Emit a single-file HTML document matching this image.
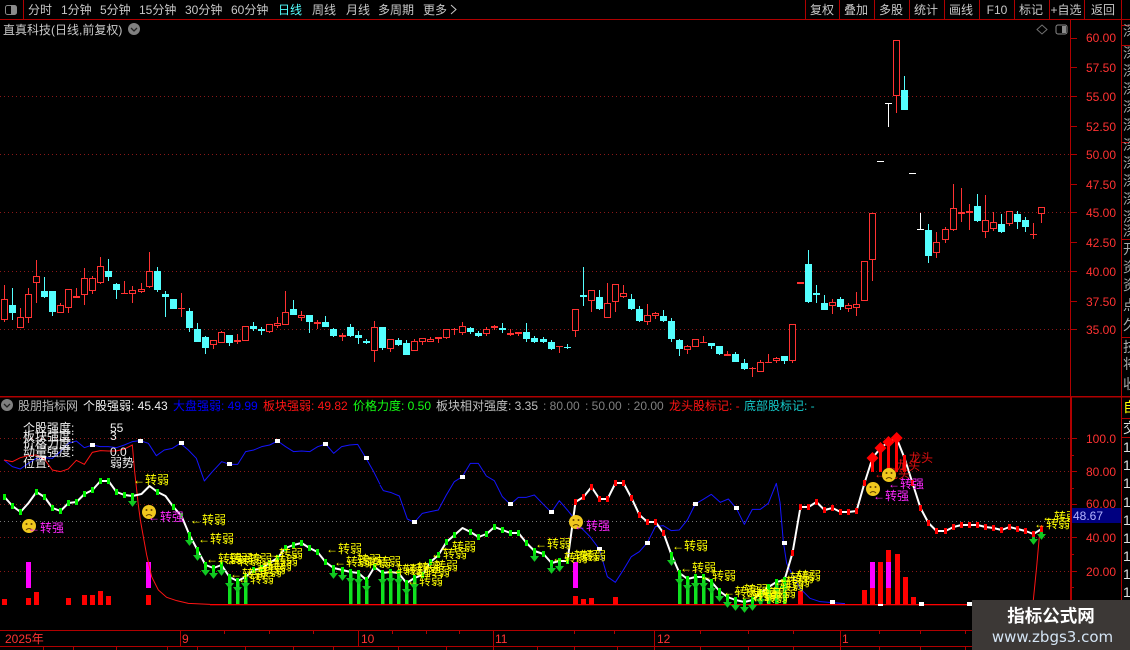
<!DOCTYPE html>
<html><head><meta charset="utf-8"><style>
html,body{margin:0;padding:0;background:#000;width:1130px;height:650px;overflow:hidden}
svg{display:block;position:absolute;left:0;top:0}
text{font-family:"Liberation Sans","WenQuanYi Zen Hei","Noto Sans CJK SC",sans-serif;font-size:12px;white-space:pre}
.y text{fill:#ffff00}
.m text{fill:#ff28ff}
.a text{fill:#ff3232;text-anchor:end}
.t text{fill:#c8c8c8}
.s text{fill:#a8a8a8;font-size:14px}
</style></head><body>
<svg id="c" width="1130" height="650" viewBox="0 0 1130 650" xmlns="http://www.w3.org/2000/svg">
<defs><clipPath id="ch"><rect x="0" y="397" width="1070" height="233"/></clipPath>
<clipPath id="sb"><rect x="1123" y="0" width="7" height="650"/></clipPath></defs>
<rect width="1130" height="650" fill="#000"/>
<!-- frame -->
<g fill="#b00000">
<rect x="0" y="19" width="1130" height="1"/><rect x="23" y="0" width="1" height="19"/>
<rect x="805" y="0" width="1" height="19"/><rect x="839" y="0" width="1" height="19"/><rect x="874" y="0" width="1" height="19"/><rect x="909" y="0" width="1" height="19"/><rect x="944" y="0" width="1" height="19"/><rect x="979" y="0" width="1" height="19"/><rect x="1014" y="0" width="1" height="19"/><rect x="1049" y="0" width="1" height="19"/><rect x="1084" y="0" width="1" height="19"/>
<rect x="1121" y="0" width="1" height="650"/>
<rect x="1070" y="20" width="1" height="376"/><rect x="1070" y="397" width="2" height="250"/>
<rect x="0" y="396" width="1130" height="1.5"/>
<rect x="0" y="630" width="1122" height="1"/><rect x="0" y="646" width="1122" height="1"/>
<rect x="1122" y="25" width="8" height="1"/><rect x="1122" y="45" width="8" height="1"/><rect x="1122" y="142" width="8" height="1"/><rect x="1122" y="239" width="8" height="1"/><rect x="1122" y="337" width="8" height="1"/><rect x="1122" y="418" width="8" height="1"/><rect x="1122" y="437" width="8" height="1"/>
<rect x="180" y="631" width="1" height="15"/><rect x="358" y="631" width="1" height="15"/><rect x="493" y="631" width="1" height="15"/><rect x="654" y="631" width="1" height="15"/><rect x="840" y="631" width="1" height="15"/>
</g>
<g id="ticks" fill="#b00000"></g>
<!-- top bar -->
<rect x="5.500" y="5.500" width="11" height="9" rx="2" fill="none" stroke="#8a8a8a" stroke-width="1"/><rect x="11" y="6" width="5" height="8" fill="#8a8a8a"/>
<g class="t">
<text x="28" y="14">分时</text><text x="61" y="14">1分钟</text><text x="100" y="14">5分钟</text><text x="139" y="14">15分钟</text><text x="185" y="14">30分钟</text><text x="231" y="14">60分钟</text>
<text x="278" y="14" style="fill:#54ffff">日线</text><text x="312" y="14">周线</text><text x="346" y="14">月线</text><text x="378" y="14">多周期</text><text x="423" y="14">更多</text>
</g>
<path d="M451 5l5 4.500-5 4.500" fill="none" stroke="#c8c8c8"/>
<g class="t" text-anchor="middle">
<text x="822" y="14">复权</text><text x="856" y="14">叠加</text><text x="891" y="14">多股</text><text x="926" y="14">统计</text><text x="961" y="14">画线</text><text x="997" y="14">F10</text><text x="1031" y="14">标记</text><text x="1066" y="14">+自选</text><text x="1103" y="14">返回</text>
</g>
<!-- main title -->
<g class="t"><text x="3" y="34">直真科技(日线,前复权)</text></g>
<circle cx="134" cy="29" r="6" fill="#808080"/><path d="M131 28l3 3 3-3" fill="none" stroke="#222" stroke-width="1.300"/>
<path d="M1042 25l5 4.500-5 4.500-5-4.500z" fill="none" stroke="#707070"/>
<rect x="1056" y="25" width="11" height="9" rx="2" fill="none" stroke="#8a8a8a"/><rect x="1062" y="26" width="4" height="7" fill="#8a8a8a"/>
<!-- grid main -->
<g stroke="#8a1818" stroke-dasharray="1 3" shape-rendering="crispEdges">
<path d="M0 96.500H1070M0 154.500H1070M0 212.500H1070M0 271.500H1070M0 329.500H1070M0 438.500H1070M0 471.500H1070M0 504.500H1070M0 537.500H1070M0 571.500H1070"/>
<path d="M0 521.500H1070" stroke="#777"/>
</g>
<!-- axis upper -->
<g class="a">
<text x="1116" y="42">60.00</text><text x="1116" y="72">57.50</text><text x="1116" y="101">55.00</text><text x="1116" y="131">52.50</text><text x="1116" y="159">50.00</text><text x="1116" y="189">47.50</text><text x="1116" y="217">45.00</text><text x="1116" y="247">42.50</text><text x="1116" y="276">40.00</text><text x="1116" y="306">37.50</text><text x="1116" y="334">35.00</text>
<text x="1116" y="443">100.0</text><text x="1116" y="476">80.00</text><text x="1116" y="508">60.00</text><text x="1116" y="542">40.00</text><text x="1116" y="576">20.00</text>
</g>
<g id="cd" shape-rendering="crispEdges"></g>
<!-- indicator header -->
<circle cx="7" cy="405" r="6" fill="#808080"/><path d="M4 404l3 3 3-3" fill="none" stroke="#222" stroke-width="1.300"/>
<text x="18" y="410" fill="#b8b8b8">股朋指标网</text>
<text x="83" y="410" fill="#f0f0f0">个股强弱: 45.43</text>
<text x="173" y="410" fill="#0000ff">大盘强弱: 49.99</text>
<text x="263" y="410" fill="#ff1414">板块强弱: 49.82</text>
<text x="353" y="410" fill="#14ff14">价格力度: 0.50</text>
<text x="436" y="410" fill="#c0c0c0">板块相对强度: 3.35</text>
<text x="543" y="410" fill="#808080">: 80.00</text><text x="585" y="410" fill="#808080">: 50.00</text><text x="627" y="410" fill="#808080">: 20.00</text>
<text x="669" y="410" fill="#ff1414">龙头股标记: -</text>
<text x="744" y="410" fill="#14c8c8">底部股标记: -</text>
<g clip-path="url(#ch)">
<!-- volume bars -->
<g fill="#ff0000" shape-rendering="crispEdges">
<rect x="2" y="599" width="5" height="6"/><rect x="26" y="598" width="5" height="7"/><rect x="34" y="592" width="5" height="13"/><rect x="66" y="598" width="5" height="7"/><rect x="82" y="595" width="5" height="10"/><rect x="90" y="595" width="5" height="10"/><rect x="98" y="591" width="5" height="14"/><rect x="106" y="596" width="5" height="9"/><rect x="146" y="595" width="5" height="10"/>
<rect x="573" y="596" width="5" height="9"/><rect x="581" y="599" width="5" height="6"/><rect x="589" y="598" width="5" height="7"/><rect x="613" y="597" width="5" height="8"/>
<rect x="798" y="591" width="5" height="14"/><rect x="862" y="590" width="5" height="15"/><rect x="870" y="588" width="5" height="17"/><rect x="878" y="562" width="5" height="43"/><rect x="886" y="550" width="5" height="55"/><rect x="895" y="554" width="5" height="51"/><rect x="903" y="577" width="5" height="28"/><rect x="911" y="597" width="5" height="8"/>
</g>
<g fill="#ff00ff" shape-rendering="crispEdges">
<rect x="26" y="562" width="5" height="26"/><rect x="146" y="562" width="5" height="26"/><rect x="573" y="562" width="5" height="26"/><rect x="870" y="562" width="5" height="26"/><rect x="886" y="562" width="5" height="26"/>
</g>
<rect x="210" y="604" width="860" height="1.300" fill="#ff0000"/>
<!-- blue line -->
<g fill="none" stroke="#1414ff" stroke-width="3" stroke-linejoin="round">
<polyline transform="translate(0,395) scale(.33333)" points="12,195 37,215 61,222 85,205 109,190 133,188 157,190 181,170 205,145 229,138 253,158 277,150 301,155 325,155 349,158 373,150 397,140 421,137 445,145 469,182 493,165 517,160 541,145 565,165 589,190 613,258 637,230 665,200 689,208 713,208 737,170 761,165 785,155 809,150 833,138 857,155 881,170 905,168 929,170 953,155 977,147 1001,175 1025,155 1049,150 1073,148 1097,188 1121,230 1140,268"/>
<polyline transform="translate(380,395) scale(.33333)" points="0,270 10,287 34,293 58,303 82,372 103,382 127,355 151,350 175,345 199,300 223,260 247,245 271,205 295,205 319,243 343,257 367,305 391,328 415,307 439,307 463,300 487,325 514,352 538,317 562,345 586,375 600,395 630,425 658,462 682,545 706,562 730,525 754,485 778,470 802,443 826,395 850,392 874,407 898,405 922,375 946,327 970,313 994,298 1021,322 1045,312 1069,340 1093,388 1117,343 1141,343 1165,325 1189,265 1200,322 1210,440 1220,505 1240,545 1260,580 1290,610 1320,620 1357,623 1395,626"/>
</g>
<g fill="#fff" shape-rendering="crispEdges">
<rect x="41" y="456" width="5" height="4"/><rect x="90" y="443" width="5" height="4"/><rect x="138" y="439" width="5" height="4"/><rect x="179" y="441" width="5" height="4"/><rect x="227" y="462" width="5" height="4"/><rect x="275" y="439" width="5" height="4"/><rect x="323" y="442" width="5" height="4"/><rect x="364" y="456" width="5" height="4"/>
<rect x="412" y="520" width="5" height="4"/><rect x="460" y="475" width="5" height="4"/><rect x="508" y="502" width="5" height="4"/><rect x="549" y="510" width="5" height="4"/><rect x="693" y="502" width="5" height="4"/><rect x="734" y="506" width="5" height="4"/><rect x="597" y="547" width="5" height="4"/><rect x="645" y="541" width="5" height="4"/><rect x="782" y="541" width="5" height="4"/><rect x="830" y="600" width="5" height="4"/><rect x="878" y="604" width="5" height="2"/><rect x="919" y="602" width="5" height="4"/><rect x="967" y="602" width="5" height="4"/>
</g>
<!-- red line -->
<polyline transform="translate(0,395) scale(.33333)" fill="none" stroke="#ff1414" stroke-width="3" points="12,195 37,200 61,188 85,182 109,180 133,192 157,225 181,230 205,222 229,196 253,208 277,172 301,167 325,168 349,168 373,162 397,150 404,230 415,330 421,375 430,425 440,480 455,545 475,585 500,607 530,617 565,625 630,628"/>
<polyline transform="translate(780,520) scale(.33333)" fill="none" stroke="#ff1414" stroke-width="3" points="760,240 770,140 778,50 785,15"/>
<g id="wl"></g>
<!-- red top shafts -->
<g fill="#ff0000" shape-rendering="crispEdges"><rect x="871" y="458" width="3" height="14"/><rect x="879" y="448" width="3" height="24"/><rect x="887" y="442" width="3" height="30"/><rect x="895" y="438" width="3" height="34"/><rect x="903" y="458" width="3" height="14"/></g>
<g fill="#ff0000"><path d="M872.500 452l6 6-6 6-6-6zM880.500 442l6 6-6 6-6-6zM888.500 436l6 6-6 6-6-6zM896.700 432l6 6-6 6-6-6z"/></g>
<text x="897" y="462" fill="#e01010">←龙头</text><text x="884" y="470" fill="#e01010">←龙头</text><text x="874" y="478" fill="#e01010">←龙头</text>
<!-- yellow labels -->
<g class="y">
<text x="133" y="484">←转弱</text><text x="190" y="524">←转弱</text><text x="198" y="543">←转弱</text><text x="206" y="563">←转弱</text><text x="217" y="563">←转弱</text><text x="226" y="565">←转弱</text><text x="236" y="563">←转弱</text><text x="230" y="578">←转弱</text><text x="238" y="583">←转弱</text><text x="246" y="576">←转弱</text><text x="250" y="573">←转弱</text><text x="256" y="570">←转弱</text><text x="262" y="565">←转弱</text><text x="267" y="558">←转弱</text>
<text x="326" y="553">←转弱</text><text x="334" y="566">←转弱</text><text x="345" y="564">←转弱</text><text x="355" y="567">←转弱</text><text x="365" y="566">←转弱</text><text x="385" y="574">←转弱</text><text x="393" y="574">←转弱</text><text x="405" y="572">←转弱</text><text x="414" y="576">←转弱</text><text x="407" y="585">←转弱</text><text x="422" y="570">←转弱</text><text x="431" y="558">←转弱</text><text x="440" y="551">←转弱</text>
<text x="535" y="548">←转弱</text><text x="552" y="562">←转弱</text><text x="562" y="560">←转弱</text><text x="570" y="560">←转弱</text>
<text x="672" y="550">←转弱</text><text x="680" y="572">←转弱</text><text x="700" y="580">←转弱</text><text x="723" y="596">←转弱</text><text x="732" y="594">←转弱</text><text x="740" y="600">←转弱</text><text x="745" y="598">←转弱</text><text x="752" y="602">←转弱</text><text x="760" y="597">←转弱</text><text x="768" y="590">←转弱</text><text x="774" y="586">←转弱</text><text x="778" y="582">←转弱</text><text x="785" y="580">←转弱</text>
<text x="1034" y="528">←转弱</text><text x="1042" y="521">←转弱</text>
</g>
<!-- smileys -->
<g id="faces">
<g transform="translate(29,526)"><circle r="7" fill="#f0c81e"/><circle cx="-2.500" cy="-2" r="1" fill="#664400"/><circle cx="2.500" cy="-2" r="1" fill="#664400"/><path d="M-3 4q3-3 6 0" fill="none" stroke="#664400"/></g>
<g transform="translate(149,512)"><circle r="7" fill="#f0c81e"/><circle cx="-2.500" cy="-2" r="1" fill="#664400"/><circle cx="2.500" cy="-2" r="1" fill="#664400"/><path d="M-3 4q3-3 6 0" fill="none" stroke="#664400"/></g>
<g transform="translate(576,522)"><circle r="7" fill="#f0c81e"/><circle cx="-2.500" cy="-2" r="1" fill="#664400"/><circle cx="2.500" cy="-2" r="1" fill="#664400"/><path d="M-3 4q3-3 6 0" fill="none" stroke="#664400"/></g>
<g transform="translate(873,489)"><circle r="7" fill="#f0c81e"/><circle cx="-2.500" cy="-2" r="1" fill="#664400"/><circle cx="2.500" cy="-2" r="1" fill="#664400"/><path d="M-3 4q3-3 6 0" fill="none" stroke="#664400"/></g>
<g transform="translate(889,475)"><circle r="7" fill="#f0c81e"/><circle cx="-2.500" cy="-2" r="1" fill="#664400"/><circle cx="2.500" cy="-2" r="1" fill="#664400"/><path d="M-3 4q3-3 6 0" fill="none" stroke="#664400"/></g>
</g>
<g class="m">
<text x="28" y="532">←转强</text><text x="148" y="521">←转强</text><text x="574" y="530">←转强</text><text x="873" y="500">←转强</text><text x="888" y="488">←转强</text>
</g>
</g>
<!-- overlay text -->
<g>
<text x="23" y="432" fill="#f0f0f0">个股强度:</text><text x="110" y="432" fill="#f0f0f0">55</text>
<text x="23" y="440" fill="#f0f0f0">板块强度:</text><text x="110" y="440" fill="#f0f0f0">3</text>
<text x="23" y="448" fill="#f0f0f0">价格力度:</text>
<text x="23" y="456" fill="#f0f0f0">动量强度:</text><text x="110" y="456" fill="#f0f0f0">0.0</text>
<text x="23" y="467" fill="#f0f0f0">位置:</text><text x="110" y="467" fill="#f0f0f0">弱势</text>
</g>
<!-- lower right value -->
<rect x="1072" y="508" width="49" height="15" fill="#000080"/>
<text x="1073" y="520" fill="#b4b4ff">48.67</text>
<!-- time axis -->
<text x="5" y="643" fill="#ff3232">2025年</text><text x="182" y="643" fill="#ff3232">9</text><text x="361" y="643" fill="#ff3232">10</text><text x="495" y="643" fill="#ff3232">11</text><text x="657" y="643" fill="#ff3232">12</text><text x="842" y="643" fill="#ff3232">1</text>
<!-- sidebar -->
<g clip-path="url(#sb)" class="s">
<text x="1123" y="36">深</text><text x="1123" y="58">深</text><text x="1123" y="76">深</text><text x="1123" y="94">深</text><text x="1123" y="112">深</text><text x="1123" y="130">深</text><text x="1123" y="150">深</text><text x="1123" y="168">深</text><text x="1123" y="186">深</text><text x="1123" y="204">深</text><text x="1123" y="222">深</text><text x="1123" y="236">深</text>
<text x="1123" y="254">开</text><text x="1123" y="272">资</text><text x="1123" y="290">资</text><text x="1123" y="310">点</text><text x="1123" y="330">久</text><text x="1123" y="352">技</text><text x="1123" y="369">将</text><text x="1123" y="389">收</text>
<text x="1123" y="412" style="fill:#ffff00">自</text><text x="1123" y="433" style="fill:#e0e0e0">交</text>
<text x="1123" y="452" style="fill:#e0e0e0">1</text><text x="1123" y="470" style="fill:#e0e0e0">1</text><text x="1123" y="488" style="fill:#e0e0e0">1</text><text x="1123" y="507" style="fill:#e0e0e0">1</text><text x="1123" y="525" style="fill:#e0e0e0">1</text><text x="1123" y="543" style="fill:#e0e0e0">1</text><text x="1123" y="561" style="fill:#e0e0e0">1</text><text x="1123" y="579" style="fill:#e0e0e0">1</text><text x="1123" y="597" style="fill:#e0e0e0">1</text>
</g>
<!-- watermark -->
<rect x="972" y="600" width="158" height="50" fill="#3c3836"/>
<text x="1051" y="622" text-anchor="middle" fill="#fff" style="font-size:17.500px;font-weight:bold;font-family:'Noto Sans CJK SC',sans-serif">指标公式网</text>
<text x="1052.500" y="642" text-anchor="middle" fill="#d4e4f4" style="font-size:15px;font-family:'DejaVu Sans',sans-serif">www.zbgs3.com</text>
<script>
(function(){
var NS="http://www.w3.org/2000/svg",R="#ff3232",C="#54ffff",W="#ffffff";
function el(p,n,a){var e=document.createElementNS(NS,n);for(var k in a)e.setAttribute(k,a[k]);p.appendChild(e);return e}
function X(i){return Math.floor(4.33+8.04*i)}
var cd=document.getElementById("cd");
function candle(i,t,wt,bt,bb,wb){
 var x=X(i),col=t=="r"?R:t=="c"?C:W;
 var hollow=t=="r"&&(bb-bt)>2.5;
 el(cd,"rect",{x:x,y:wt,width:1,height:Math.max(wb-wt,1),fill:col});
 if(t=="w"){el(cd,"rect",{x:x-3,y:bt,width:7,height:Math.max(bb-bt,1),fill:col});return}
 if(hollow){el(cd,"rect",{x:x-3,y:bt,width:7,height:bb-bt,fill:"#000"});
  el(cd,"rect",{x:x-2.5,y:bt+.5,width:6,height:bb-bt-1,fill:"none",stroke:col,"stroke-width":1});}
 else el(cd,"rect",{x:x-3,y:bt,width:7,height:Math.max(bb-bt,1),fill:col});
}
function block(y0,start,s){s.split(";").forEach(function(r,k){var p=r.trim().split(" ");
 var f=function(v){return Math.round(y0+(+v)/3)};
 candle(start+k,p[0],f(p[1]),f(p[2]),f(p[3]),f(p[4]));});}
block(240,0,"r 135 178 239 245;c 144 195 219 240;r 205 232 263 263;r 144 163 233 248;r 60 109 128 188;c 111 153 171 173;c 153 153 216 228;r 189 196 219 219;r 147 148 203 219;r 144 168 174 174;r 84 115 164 195;r 108 115 152 162;r 51 79 128 131;c 57 93 111 123;c 129 132 150 177;r 123 159 161 162;r 138 151 161 189;r 129 148 155 159;r 36 94 140 144;c 81 93 150 156;c 153 162 171 231;c 177 177 207 207;r 159 204 206 231;c 205 213 264 276;c 249 267 306 306;c 288 291 324 342;r 300 301 315 327;r 274 277 309 309;c 285 285 309 318;r 282 300 306 312;r 258 259 303 303;c 246 258 267 273;c 261 267 273 285;r 252 253 276 279;r 231 250 258 264;r 153 217 255 255;c 180 207 225 225;r 213 226 234 243;c 225 225 246 279;r 240 246 252 267;c 228 246 261 261;c 264 267 288 291;r 279 285 291 303;c 252 261 288 291;c 273 285 294 312;c 297 303 309 312;r 243 262 333 366");
block(280,47,"c 141 141 204 210;r 177 178 206 216;c 174 180 195 197;c 180 189 225 225;r 178 184 212 213;r 175 175 185 195;r 171 178 185 186;r 171 171 177 189;r 147 148 173 177;r 144 147 149 165;r 126 139 158 165;c 141 144 156 162;c 153 159 168 171;r 141 148 162 168;r 135 139 145 150;c 129 144 150 159;r 147 159 165 168;r 156 156 162 168;c 129 156 177 186;c 168 174 186 189;c 171 177 186 189;c 180 186 207 210;r 198 198 200 219;c 192 201 204 207;r 88 88 152 171;c -39 45 51 78;r 30 31 63 96;c 30 51 87 90;r 9 69 113 114;r 12 13 65 96;r 15 40 50 54;c 42 57 87 90;c 78 87 123 126;r 72 105 125 135;r 96 99 107 117;c 90 108 123 126;c 114 123 177 186;c 177 180 207 228;r 195 199 209 222;r 177 178 200 201;r 168 186 188 189;c 189 189 198 207;c 198 198 222 225;r 213 222 228 228;c 216 222 246 246;c 237 249 267 270;r 261 263 265 291;r 240 247 275 276;r 222 246 248 249;r 231 235 242 249;c 228 228 243 252;r 132 133 242 249");
block(130,99,"r 456 456 462 462;c 360 402 516 519;c 465 489 495 519;c 495 519 540 540;r 507 516 527 552;c 501 507 531 540;r 519 526 537 546;r 486 523 533 558;r 393 394 512 513;r 250 250 389 453;w 93 93 96 96");
block(0,110,"w 309 309 312 381;r 121 121 289 339;c 228 270 329 329");
block(130,113,"w 129 129 132 132;w 250 296 299 299;c 282 300 378 399;r 306 337 369 384;r 291 298 329 339;r 162 235 299 303;r 174 246 251 276;r 222 243 248 300;c 192 228 273 276;r 195 271 305 324;r 246 277 297 303;c 252 282 306 309;r 243 244 281 288;c 243 252 276 297;c 261 270 291 306;r 279 312 315 327;r 232 232 251 279");
/* indicator */
var Y=[497,506,512,503,492,497,508,511,503,502,494,490,481,481,492,495,496,494,486,492,496,507,516,535,550,565,568,565,577,581,577,570,568,563,558,548,545,543,548,552,562,568,570,572,573,580,567,573,572,573,583,578,575,562,555,542,535,528,532,537,534,527,530,533,533,543,551,554,563,561,561,502,497,487,499,499,483,483,498,515,522,522,533,555,573,579,577,577,582,591,597,600,602,600,593,587,582,580,553,507,507,502,510,508,512,512,511,483,458,448,442,438,458,483,508,523,531,531,527,525,525,525,527,528,530,527,529,531,534,529];
var wl=document.getElementById("wl"),pts=[];
Y.forEach(function(v,i){pts.push((X(i)+.5)+","+v)});
el(wl,"polyline",{points:pts.join(" "),fill:"none",stroke:"#fff","stroke-width":2,"stroke-linejoin":"round"});
var G="#00f000",D="#ff0000";
function isRed(i){return (i>=71&&i<=82)||i>=98}
function head(x,y,s){el(wl,"polygon",{points:(x+.5-s)+","+y+" "+(x+.5+s)+","+y+" "+(x+.5)+","+(y+s*1.3),fill:"#10c820"})}
var arrows=[16,23,24,25,26,27,41,42,66,68,69,83,89,90,91,92,93,128,129];
var bars=[28,29,30,43,44,45,47,48,49,50,51,84,85,86,87,88,94,95,96,97];
arrows.forEach(function(i){var x=X(i),y=Y[i];
 el(wl,"rect",{x:x-1,y:y-3,width:3,height:9,fill:"#10c820"});head(x,y+5,4.5)});
bars.forEach(function(i){var x=X(i),y=Y[i];
 el(wl,"rect",{x:x-1,y:y,width:3.5,height:604-y,fill:"#10e020"});head(x,y+6,4.5)});
var skip={3:1,17:1,18:1,20:1,57:1,109:1,110:1,111:1};
Y.forEach(function(v,i){var x=X(i);if(skip[i])return;
 el(wl,"rect",{x:x-1,y:v-3,width:3,height:6,fill:isRed(i)?D:G,"shape-rendering":"crispEdges"})});
/* ticks */
var t=document.getElementById("ticks");
[38,67,96,126,154,184,212,242,271,301,329,438,471,504,537,571].forEach(function(y){el(t,"rect",{x:1071,y:y,width:6,height:1})});
[455,488,554,587].forEach(function(y){el(t,"rect",{x:1071,y:y,width:3,height:1})});
[224,269,313,392,426,459,574,614,700,748,793,879,920,965,1010,1050].forEach(function(x){el(t,"rect",{x:x,y:631,width:1,height:3})});
[43,73,116,167,197,245,293,333,398,446,493,537,574,617,654,700,748,793,840,879,920,965,1010,1050,1095].forEach(function(x){el(t,"rect",{x:x,y:647,width:1,height:3})});
})();
</script>
</svg>
</body></html>
